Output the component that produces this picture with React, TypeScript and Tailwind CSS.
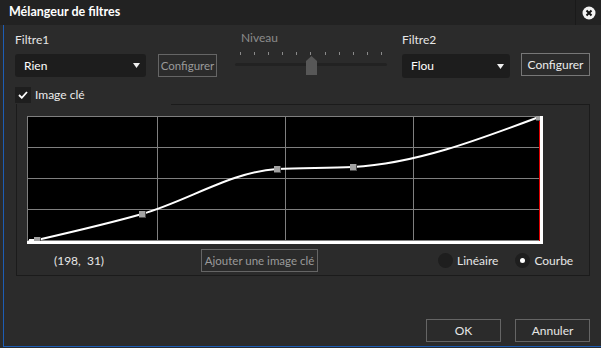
import React from "react";

const PTS: [number, number][] = [
  [10, 124],
  [115, 98],
  [250, 53],
  [326, 51],
  [512, 1],
];

// monotone cubic through the key points
function curvePath(pts: [number, number][]) {
  const n = pts.length;
  const h: number[] = [];
  const s: number[] = [];
  for (let i = 0; i < n - 1; i++) {
    h.push(pts[i + 1][0] - pts[i][0]);
    s.push((pts[i + 1][1] - pts[i][1]) / h[i]);
  }
  const m: number[] = new Array(n).fill(0);
  for (let i = 1; i < n - 1; i++) {
    const p = (s[i - 1] * h[i] + s[i] * h[i - 1]) / (h[i - 1] + h[i]);
    m[i] =
      (Math.sign(s[i - 1]) + Math.sign(s[i])) *
      Math.min(Math.abs(s[i - 1]), Math.abs(s[i]), 0.5 * Math.abs(p));
  }
  m[0] = (3 * s[0] - m[1]) / 2;
  m[n - 1] = (3 * s[n - 2] - m[n - 2]) / 2;
  let d = `M2,124 L${pts[0][0]},${pts[0][1]}`;
  for (let i = 0; i < n - 1; i++) {
    const [x0, y0] = pts[i];
    const [x1, y1] = pts[i + 1];
    const dx = h[i] / 3;
    d += ` C${x0 + dx},${y0 + m[i] * dx} ${x1 - dx},${y1 - m[i + 1] * dx} ${x1},${y1}`;
  }
  return d;
}

const Arrow = () => (
  <svg width="7" height="5" viewBox="0 0 7 5">
    <path d="M0 0 H7 L3.5 5 Z" fill="#f0f0f0" />
  </svg>
);

const Graph = () => (
  <svg width="516" height="128" viewBox="0 0 516 128" className="block">
    <rect x="0" y="0" width="516" height="128" fill="#000" />
    <g stroke="#7f7f7f" strokeWidth="1">
      <line x1="0.5" y1="0" x2="0.5" y2="125" />
      <line x1="0" y1="0.5" x2="513" y2="0.5" />
      <line x1="130.5" y1="0" x2="130.5" y2="125" />
      <line x1="258.5" y1="0" x2="258.5" y2="125" />
      <line x1="386.5" y1="0" x2="386.5" y2="125" />
      <line x1="0" y1="31.5" x2="513" y2="31.5" />
      <line x1="0" y1="62.5" x2="513" y2="62.5" />
      <line x1="0" y1="93.5" x2="513" y2="93.5" />
      <line x1="0" y1="124.5" x2="513" y2="124.5" />
    </g>
    <line x1="512.5" y1="1" x2="512.5" y2="125" stroke="#e00000" strokeWidth="1" />
    <path d={curvePath(PTS)} fill="none" stroke="#fff" strokeWidth="2" />
    {PTS.map(([x, y], i) => (
      <g key={i}>
        <rect x={x - 3} y={y - 3} width="7" height="7" fill="#4a4a4a" />
        <rect x={x - 3} y={y - 3} width="6" height="6" fill="#a2a2a2" />
      </g>
    ))}
    <rect x="513" y="0" width="3" height="128" fill="#fff" />
    <rect x="0" y="125" width="516" height="3" fill="#fff" />
  </svg>
);

export default function App() {
  return (
    <div
      className="w-[601px] h-[348px] bg-[#2b2b2b] flex flex-col text-[12px] text-[#e6e6e6] overflow-hidden"
      style={{ fontFamily: 'Lato, "Open Sans", sans-serif' }}
    >
      {/* title bar */}
      <div className="h-[25px] bg-[#222222] flex items-center shrink-0">
        <div className="pl-[9px] flex-1 font-bold text-[12.5px] text-white leading-none">Mélangeur de filtres</div>
        <div className="w-px h-full bg-[#1a1a1a]" />
        <div className="w-[25px] flex items-center justify-center">
          <svg width="14" height="14" viewBox="0 0 14 14">
            <circle cx="7" cy="7" r="6.5" fill="#f2f2f2" />
            <path d="M4.5 4.5 L9.5 9.5 M9.5 4.5 L4.5 9.5" stroke="#111" strokeWidth="2" />
          </svg>
        </div>
      </div>

      {/* body */}
      <div className="flex-1 ml-[3px] mb-[1px] border-l border-b border-[#1d5db5] flex flex-col pl-[11px]">
        {/* filters row */}
        <div className="flex items-start pt-[7px]">
          <div className="w-[131px]">
            <div className="h-[22px] leading-[16px]">Filtre1</div>
            <div className="h-[23px] bg-[#1d1d1d] rounded-[3px] flex items-center pl-[9px] pr-[6px] text-white">
              <span className="flex-1">Rien</span>
              <Arrow />
            </div>
          </div>
          <div className="ml-[12px] mt-[22px] w-[59px] h-[23px] border border-[#656565] flex items-center justify-center text-[11.5px] text-[#9a9a9a]">
            Configurer
          </div>
          <div className="ml-[18px] w-[152px] relative">
            <div className="h-[20px] leading-[12px] pl-[6px] text-[#8c8c8c]">Niveau</div>
            <div className="h-[3px] flex justify-between px-[5px]">
              {Array.from({ length: 11 }).map((_, i) => (
                <div key={i} className="w-px h-full bg-[#8a8a8a]" />
              ))}
            </div>
            <div className="mt-[8px] h-[3px] rounded-full bg-[#222222]" />
            <svg width="11" height="19" viewBox="0 0 11 19" className="absolute left-[71px] top-[24px]">
              <path d="M0 5 L5.5 0 L11 5 V19 H0 Z" fill="#575757" />
            </svg>
          </div>
          <div className="ml-[15px] w-[108px]">
            <div className="h-[22px] leading-[16px]">Filtre2</div>
            <div className="h-[24px] bg-[#1d1d1d] rounded-[3px] flex items-center pl-[9px] pr-[6px] text-white">
              <span className="flex-1">Flou</span>
              <Arrow />
            </div>
          </div>
          <div className="ml-[11px] mt-[21px] w-[69px] h-[23px] border border-[#777777] flex items-center justify-center text-[#ececec]">
            Configurer
          </div>
        </div>

        {/* key image checkbox */}
        <div className="mt-[9px] h-[16px] flex items-center">
          <div className="w-[16px] h-[16px] bg-[#1e1e1e] flex items-center justify-center">
            <svg width="10" height="8" viewBox="0 0 10 8">
              <path d="M1 4 L3.8 6.8 L9 1" fill="none" stroke="#fff" strokeWidth="1.8" />
            </svg>
          </div>
          <span className="ml-[4px] text-[#ececec]">Image clé</span>
        </div>

        {/* group box */}
        <div className="mt-px ml-px w-[574px] h-[172px] border-x border-b border-[#1b1b1b] flex flex-col">
          <div className="flex">
            <div className="w-[154px]" />
            <div className="flex-1 border-t border-[#1b1b1b]" />
          </div>
          <div className="ml-[10px] mt-[11px]">
            <Graph />
          </div>
          <div className="mt-[5px] flex items-center h-[23px]">
            <div className="w-[184px] pl-[37px] whitespace-pre">(198,  31)</div>
            <div className="w-[117px] h-[23px] border border-[#656565] flex items-center justify-center text-[11.5px] text-[#9a9a9a] whitespace-nowrap">
              Ajouter une image clé
            </div>
            <div className="ml-[120px] flex items-center">
              <div className="w-[15px] h-[15px] rounded-full bg-[#1e1e1e]" />
              <span className="ml-[4px]">Linéaire</span>
              <div className="ml-[17px] w-[15px] h-[15px] rounded-full bg-[#1e1e1e] flex items-center justify-center">
                <div className="w-[5px] h-[5px] rounded-full bg-white" />
              </div>
              <span className="ml-[4px]">Courbe</span>
            </div>
          </div>
        </div>

        {/* dialog buttons */}
        <div className="flex-1" />
        <div className="flex justify-end gap-[14px] pr-[11px] mb-[4px]">
          <div className="w-[75px] h-[23px] border border-[#656565] flex items-center justify-center">OK</div>
          <div className="w-[75px] h-[23px] border border-[#656565] flex items-center justify-center">Annuler</div>
        </div>
      </div>
    </div>
  );
}
